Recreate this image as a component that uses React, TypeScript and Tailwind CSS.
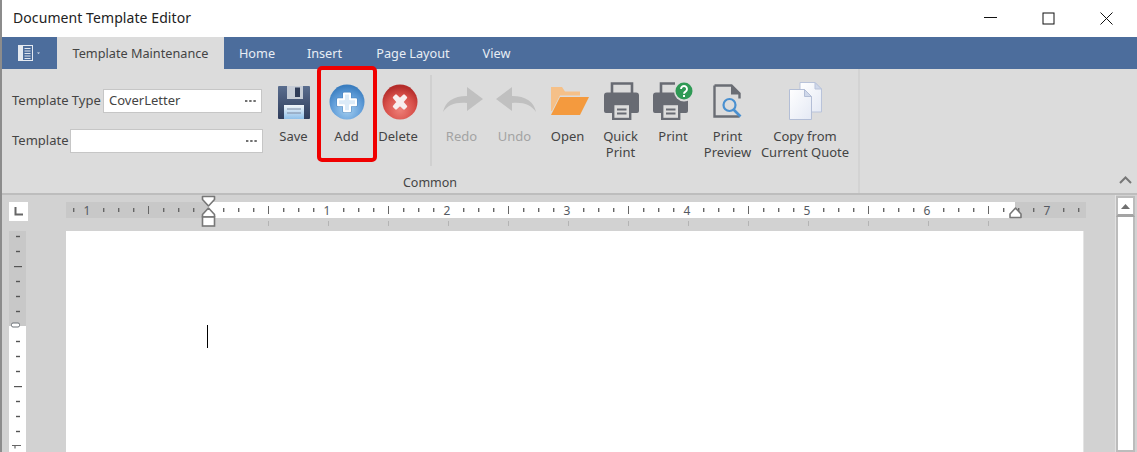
import React from "react";

function AppMenuIcon() {
  return (
    <svg width="28" height="18" viewBox="0 0 28 18">
      <rect x="1" y="1" width="4" height="16" fill="#fff" opacity="0.85" />
      <rect x="5.5" y="1.5" width="10" height="15" fill="none" stroke="#e6ebf2" strokeWidth="1" />
      <path d="M7.5 4.5h6M7.5 7h6M7.5 9.5h6M7.5 12h6M7.5 14.5h6" stroke="#dfe5ee" strokeWidth="1" />
      <path d="M20 8.5h3l-1.5 1.5z" fill="#dfe5ee" />
    </svg>
  );
}

function SaveIcon() {
  return (
    <svg width="34" height="35" viewBox="0 0 34 35" className="ml-[1px]">
      <defs>
        <linearGradient id="sv" x1="0" y1="0" x2="0" y2="1">
          <stop offset="0" stopColor="#5a6d8e" />
          <stop offset="1" stopColor="#2f3d5c" />
        </linearGradient>
        <linearGradient id="svl" x1="0" y1="0" x2="0" y2="1">
          <stop offset="0" stopColor="#f2f5f9" />
          <stop offset="1" stopColor="#8fc0ea" />
        </linearGradient>
      </defs>
      <path d="M1 2a1 1 0 0 1 1-1h30a1 1 0 0 1 1 1v31a1 1 0 0 1-1 1H2a1 1 0 0 1-1-1z" fill="url(#sv)" />
      <rect x="10" y="1" width="16" height="13" fill="#c6ccd6" />
      <rect x="18" y="2.5" width="5" height="9.5" fill="#2f3c58" />
      <rect x="7" y="20" width="20" height="14" fill="url(#svl)" />
      <path d="M10 24h14M10 28h14" stroke="#7d8ba3" strokeWidth="1" />
    </svg>
  );
}

function AddIcon() {
  return (
    <svg width="36" height="36" viewBox="0 0 36 36">
      <defs>
        <radialGradient id="ad" cx="0.5" cy="0.72" r="0.68">
          <stop offset="0" stopColor="#a6d0f0" />
          <stop offset="0.6" stopColor="#639fda" />
          <stop offset="1" stopColor="#3a7dbf" />
        </radialGradient>
      </defs>
      <circle cx="18" cy="18" r="17.5" fill="url(#ad)" />
      <path d="M15 9.5h6v5.7h6v6h-6v6h-6v-6H9v-6h6z" fill="none" stroke="#3f78b2" strokeWidth="3.4" strokeLinejoin="round" opacity="0.55" />
      <path d="M15 9.5h6v5.7h6v6h-6v6h-6v-6H9v-6h6z" fill="#dcebf8" stroke="#ffffff" strokeWidth="2" strokeLinejoin="round" />
    </svg>
  );
}

function DeleteIcon() {
  return (
    <svg width="36" height="36" viewBox="0 0 36 36" className="ml-[3px]">
      <defs>
        <radialGradient id="de" cx="0.5" cy="0.72" r="0.66">
          <stop offset="0" stopColor="#ee8078" />
          <stop offset="0.62" stopColor="#d8504a" />
          <stop offset="1" stopColor="#b42c2a" />
        </radialGradient>
      </defs>
      <circle cx="18" cy="18" r="17.5" fill="url(#de)" />
      <path d="M12 13.5l2-2 4 3.8 4-3.8 2 2-3.8 4.5 3.8 4.5-2 2-4-3.8-4 3.8-2-2 3.8-4.5z" fill="#f8eeee" stroke="#f8eeee" strokeWidth="2.4" strokeLinejoin="round" />
    </svg>
  );
}

function RedoIcon() {
  return (
    <svg width="40" height="26" viewBox="0 0 40 26" className="mb-[5px] ml-[2px]">
      <path d="M0 25C2 15 10 9 24 9V0l16 12-16 12v-8C12 15 5 18 0 25z" fill="#c0c0c0" />
    </svg>
  );
}

function UndoIcon() {
  return (
    <svg width="40" height="26" viewBox="0 0 40 26" className="mb-[5px] ml-[2px]">
      <path d="M40 25C38 15 30 9 16 9V0L0 12l16 12v-8C28 15 35 18 40 25z" fill="#c0c0c0" />
    </svg>
  );
}

function OpenIcon() {
  return (
    <svg width="38" height="28" viewBox="0 0 38 28" className="mb-[2px] ml-[5px]">
      <path d="M0 0h11l3 4.5h15v4H9L1 24H0z" fill="#f5c088" />
      <path d="M9 10h29L29 28H0z" fill="#f49a3e" />
    </svg>
  );
}

function PrinterParts({ top }: { top: string }) {
  return (
    <>
      <path d={top} fill="none" stroke="#686b73" strokeWidth="2.6" />
      <path d="M3 10.5h29a3 3 0 0 1 3 3V29a2 2 0 0 1-2 2H2a2 2 0 0 1-2-2V13.5a3 3 0 0 1 3-3z" fill="#686b73" />
      <rect x="9.2" y="22" width="17" height="15" fill="#dcdcdc" stroke="#686b73" strokeWidth="2.4" />
      <path d="M13 27.5h9.5M13 31.5h9.5" stroke="#686b73" strokeWidth="2" />
    </>
  );
}

function QuickPrintIcon() {
  return (
    <svg width="36" height="38" viewBox="0 0 36 38" className="mb-[3px] ml-[2px]">
      <PrinterParts top="M8 11V1.5h20V11" />
    </svg>
  );
}

function PrintIcon() {
  return (
    <svg width="41" height="38" viewBox="0 0 41 38" className="mb-[3px]">
      <PrinterParts top="M8 11V1.5h14" />
      <circle cx="31" cy="9.5" r="10" fill="#dcdcdc" />
      <circle cx="31" cy="9" r="8.5" fill="#2f9a55" />
      <path d="M28 7a3 3 0 1 1 4.5 2.6c-1 .6-1.5 1-1.5 2.2" fill="none" stroke="#fff" strokeWidth="1.9" />
      <rect x="30" y="13" width="2" height="2" fill="#fff" />
    </svg>
  );
}

function PreviewIcon() {
  return (
    <svg width="30" height="35" viewBox="0 0 30 35" className="mb-[2px]">
      <path d="M1.5 1.5h17l8 8v5M26.5 32.5h-25v-31" fill="none" stroke="#6a6d74" strokeWidth="2.4" />
      <path d="M18 1.5l9 9h-9z" fill="#6a6d74" />
      <circle cx="16.5" cy="21" r="6" fill="none" stroke="#4a90d0" strokeWidth="2.2" />
      <path d="M20.5 25.5l7 7" stroke="#4a90d0" strokeWidth="2.6" />
    </svg>
  );
}

function CopyIcon() {
  return (
    <svg width="33" height="38" viewBox="0 0 33 38" className="mb-[3px]">
      <defs>
        <linearGradient id="cp" x1="0" y1="0" x2="1" y2="1">
          <stop offset="0" stopColor="#ffffff" />
          <stop offset="1" stopColor="#e4e9f4" />
        </linearGradient>
      </defs>
      <path d="M11 .5h15l6.5 6.5v23H11z" fill="url(#cp)" stroke="#b9c3da" />
      <path d="M26 .5v6.5h6.5z" fill="#cfd8ea" stroke="#b9c3da" strokeLinejoin="round" />
      <path d="M.5 7.5h15l7 7v23H.5z" fill="url(#cp)" stroke="#b3bed6" />
      <path d="M15.5 7.5v7h7z" fill="#cfd8ea" stroke="#b3bed6" strokeLinejoin="round" />
    </svg>
  );
}

function RibbonButton({ w, icon, lines, disabled, children }: { w: string; icon: React.ReactNode; lines: string[]; disabled?: boolean; children?: React.ReactNode }) {
  return (
    <div className={`relative flex flex-col items-center shrink-0 ${w}`}>
      <div className="h-[52px] w-full flex items-center justify-center">{icon}</div>
      <div className={`flex flex-col items-center text-[13px] leading-[16px] whitespace-nowrap ${disabled ? "text-[#a3a3a3]" : "text-[#444]"}`}>
        {lines.map((l) => (
          <span key={l}>{l}</span>
        ))}
      </div>
      {children}
    </div>
  );
}

function Field({ w, value }: { w: string; value?: string }) {
  return (
    <div className={`${w} h-[24px] bg-white border border-[#c6c6c6] flex items-center justify-between pl-[5px] pr-[4px] text-[13px] text-[#444]`}>
      <span>{value}</span>
      <svg width="11" height="2" viewBox="0 0 11 2" className="mr-px"><path d="M0 0h2.4v2H0zM4.2 0h2.4v2H4.2zM8.4 0h2.4v2H8.4z" fill="#707070" /></svg>
    </div>
  );
}

function HorizontalRuler() {
  const ticks: React.ReactNode[] = [];
  const origin = 142;
  for (let i = -9; i <= 58; i++) {
    const x = origin + i * 15;
    if (x < 3 || x > 1017) continue;
    const m = i % 8;
    if (m === 0) continue;
    if (Math.abs(i % 4) === 0) {
      ticks.push(<rect key={i} x={x} y={4} width="1" height="8" fill="#666" />);
    } else {
      ticks.push(<rect key={i} x={x} y={6} width="1.4" height="4" fill="#666" />);
    }
  }
  const small: React.ReactNode[] = [];
  for (let i = 1; i <= 13; i++) {
    small.push(<rect key={i} x={origin + i * 60} y={19} width="1" height="5" fill="#b4b4b4" />);
  }
  const numbers = [
    { n: "1", x: 21 },
    { n: "1", x: 261 },
    { n: "2", x: 381 },
    { n: "3", x: 501 },
    { n: "4", x: 621 },
    { n: "5", x: 741 },
    { n: "6", x: 861 },
    { n: "7", x: 981 },
  ];
  return (
    <svg width="1020" height="29" viewBox="0 0 1020 29" className="overflow-visible block">
      <rect x="0" y="0" width="1020" height="16" fill="#c8c8c8" />
      <rect x="142" y="0" width="807" height="16" fill="#ffffff" />
      {ticks}
      {small}
      {numbers.map((d) => (
        <text key={d.x} x={d.x} y="12.5" textAnchor="middle" fontSize="12" fill="#555a62" fontFamily="'Noto Sans', sans-serif">
          {d.n}
        </text>
      ))}
      <path d="M136.5 -5.5h12v3l-6 6.5-6-6.5z" fill="#fff" stroke="#777" strokeWidth="1.6" strokeLinejoin="round" />
      <path d="M142.5 6l6 6.5V15h-12v-2.5z" fill="#fff" stroke="#777" strokeWidth="1.6" strokeLinejoin="round" />
      <rect x="136.5" y="15" width="12" height="9" fill="#fff" stroke="#777" strokeWidth="1.6" />
      <path d="M944 15.5v-3.5l5.5-6 5.5 6v3.5z" fill="#fff" stroke="#777" strokeWidth="1.6" strokeLinejoin="round" />
    </svg>
  );
}

function VerticalRuler() {
  const ticks: React.ReactNode[] = [];
  for (let i = 0; i < 15; i++) {
    const y = 5 + i * 15;
    if (i === 6 || i === 14) continue;
    if (i === 2 || i === 10) {
      ticks.push(<rect key={i} x={5} y={y} width="8" height="1.2" fill="#555" />);
    } else {
      ticks.push(<rect key={i} x={7} y={y - 0.2} width="4" height="1.4" fill="#555" />);
    }
  }
  return (
    <svg width="17" height="221" viewBox="0 0 17 221" className="block">
      <rect x="0" y="0" width="17" height="95" fill="#c8c8c8" />
      <rect x="0" y="95" width="17" height="126" fill="#ffffff" />
      {ticks}
      <rect x="2.5" y="92" width="8" height="4" rx="1.5" fill="#fff" stroke="#6d7278" strokeWidth="1" />
      <path d="M3 214.5h9M6 214.5v3" stroke="#666" strokeWidth="1.2" />
    </svg>
  );
}

export default function App() {
  return (
    <div className="w-[1137px] h-[452px] overflow-hidden flex flex-col bg-[#d2d2d2] border-l-2 border-[#8c8c8c] font-['Noto_Sans',sans-serif] text-[#444]">
      {/* title bar */}
      <div className="h-[37px] bg-white shrink-0 flex items-center justify-between">
        <span className="pl-[11px] pb-[2px] text-[14px] tracking-[0.08px] text-[#222]">Document Template Editor</span>
        <div className="flex pr-[2px]">
          <div className="w-[58px] h-[37px] flex items-center justify-center">
            <svg width="13" height="13" viewBox="0 0 13 13"><path d="M0 5.5h13" stroke="#111" strokeWidth="1" /></svg>
          </div>
          <div className="w-[58px] h-[37px] flex items-center justify-center">
            <svg width="13" height="13" viewBox="0 0 13 13"><rect x="1" y="1" width="11" height="11" fill="none" stroke="#111" strokeWidth="1" /></svg>
          </div>
          <div className="w-[58px] h-[37px] flex items-center justify-center">
            <svg width="13" height="13" viewBox="0 0 13 13"><path d="M.5.5l12 12M12.5.5l-12 12" stroke="#111" strokeWidth="1" /></svg>
          </div>
        </div>
      </div>

      {/* tabs */}
      <div className="h-[32px] bg-[#4c6d9c] shrink-0 flex text-[12.7px] text-[#e8edf4]">
        <div className="w-[55px] flex items-center justify-center pl-[2px]"><AppMenuIcon /></div>
        <div className="w-[167px] bg-[#dcdcdc] text-[#444] flex items-center justify-center pt-[1px]">Template Maintenance</div>
        <div className="w-[66px] flex items-center justify-center pt-[1px]">Home</div>
        <div className="w-[69px] flex items-center justify-center pt-[1px]">Insert</div>
        <div className="w-[108px] flex items-center justify-center pt-[1px]">Page Layout</div>
        <div className="w-[59px] flex items-center justify-center pt-[1px]">View</div>
      </div>

      {/* ribbon */}
      <div className="h-[126px] shrink-0 bg-[#dcdcdc] border-b-2 border-[#bdbdbd] flex relative">
        <div className="w-[858px] shrink-0 border-r-2 border-[#d3d3d3] flex flex-col">
          <div className="flex h-[103px]">
            <div className="w-[265px] shrink-0 pl-[10px] pt-[20px] flex flex-col gap-[16px] text-[13px]">
              <div className="flex items-center gap-[3px]">
                <span className="w-[88px] whitespace-nowrap">Template Type</span>
                <Field w="w-[159px]" value="CoverLetter" />
              </div>
              <div className="flex items-center gap-[3px]">
                <span className="w-[55px]">Template</span>
                <Field w="w-[193px]" />
              </div>
            </div>
            <div className="flex pt-[7px]">
              <RibbonButton w="w-[53px]" icon={<SaveIcon />} lines={["Save"]} />
              <RibbonButton w="w-[53px]" icon={<AddIcon />} lines={["Add"]}>
                <div className="absolute left-[-3px] top-[-10px] w-[60px] h-[96px] border-[4px] border-[#f00000] rounded-[5px]" />
              </RibbonButton>
              <RibbonButton w="w-[50px]" icon={<DeleteIcon />} lines={["Delete"]} />
              <div className="w-[2px] h-[91px] -mt-[1px] ml-[7px] mr-[3px] bg-[#d0d0d0] shrink-0" />
              <RibbonButton w="w-[53px]" icon={<RedoIcon />} lines={["Redo"]} disabled />
              <RibbonButton w="w-[53px]" icon={<UndoIcon />} lines={["Undo"]} disabled />
              <RibbonButton w="w-[53px]" icon={<OpenIcon />} lines={["Open"]} />
              <RibbonButton w="w-[53px]" icon={<QuickPrintIcon />} lines={["Quick", "Print"]} />
              <RibbonButton w="w-[52px]" icon={<PrintIcon />} lines={["Print"]} />
              <RibbonButton w="w-[57px]" icon={<PreviewIcon />} lines={["Print", "Preview"]} />
              <RibbonButton w="w-[98px]" icon={<CopyIcon />} lines={["Copy from", "Current Quote"]} />
            </div>
          </div>
          <div className="text-center text-[12.5px] leading-[16px] pt-[3px]">Common</div>
        </div>
        <div className="flex-1 flex items-end justify-end pr-[5px] pb-[9px]">
          <svg width="13" height="8" viewBox="0 0 13 8"><path d="M1 7l5.5-5.5L12 7" fill="none" stroke="#777" strokeWidth="2" /></svg>
        </div>
      </div>

      {/* workspace */}
      <div className="flex-1 flex min-h-0">
        <div className="w-[1113px] shrink-0 flex flex-col pt-[7px]">
          <div className="h-[29px] flex shrink-0">
            <div className="w-[64px] shrink-0 pl-[7px]">
              <div className="w-[19px] h-[19px] bg-white flex items-center justify-center">
                <svg width="9" height="9" viewBox="0 0 9 9"><path d="M1.5 0v7.5H9" fill="none" stroke="#666" strokeWidth="2" /></svg>
              </div>
            </div>
            <HorizontalRuler />
          </div>
          <div className="flex-1 flex min-h-0">
            <div className="w-[64px] shrink-0 pl-[7px]"><VerticalRuler /></div>
            <div className="w-[1018px] shrink-0 bg-white border-r border-[#e4e4e4] relative">
              <div className="w-px h-[23px] bg-black ml-[141px] mt-[94px]" />
            </div>
          </div>
        </div>
        <div className="w-[20px] shrink-0 pt-[1px] flex flex-col border-l border-[#e2e2e2]">
          <div className="h-[21px] bg-white border-2 border-b-[3px] border-[#bcbcbc] border-b-[#a4a4a4] flex items-center justify-center shrink-0">
            <svg width="9" height="5" viewBox="0 0 9 5"><path d="M4.5 0l4.5 5H0z" fill="#707070" /></svg>
          </div>
          <div className="flex-1 bg-white border-2 border-t-0 border-[#bcbcbc]" />
        </div>
      </div>
    </div>
  );
}
